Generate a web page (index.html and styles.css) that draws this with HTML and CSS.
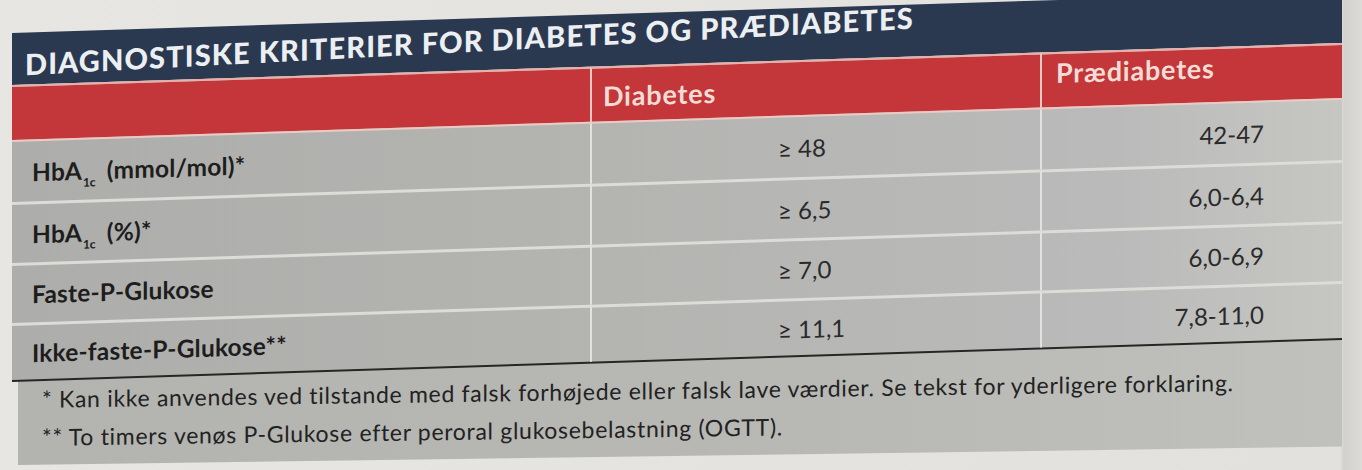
FILE: index.html
```html
<!DOCTYPE html>
<html lang="da">
<head>
<meta charset="utf-8">
<title>Diagnostiske kriterier for diabetes og prædiabetes</title>
<link rel="stylesheet" href="styles.css">
</head>
<body>
<div class="page">
  <div class="card">
    <div class="title"><h1>DIAGNOSTISKE KRITERIER FOR DIABETES OG PRÆDIABETES</h1></div>
    <div class="table">
      <div class="th"></div>
      <div class="th th-d"><span>Diabetes</span></div>
      <div class="th th-p"><span>Prædiabetes</span></div>

      <div class="td label first"><span>HbA<sub class="sub">1c</sub> (mmol/mol)*</span></div>
      <div class="td val-d first"><span>≥ 48</span></div>
      <div class="td val-p first"><span>42-47</span></div>

      <div class="td label"><span>HbA<sub class="sub">1c</sub> (%)*</span></div>
      <div class="td val-d"><span>≥ 6,5</span></div>
      <div class="td val-p"><span>6,0-6,4</span></div>

      <div class="td label"><span>Faste-P-Glukose</span></div>
      <div class="td val-d"><span>≥ 7,0</span></div>
      <div class="td val-p"><span>6,0-6,9</span></div>

      <div class="td label"><span>Ikke-faste-P-Glukose**</span></div>
      <div class="td val-d"><span>≥ 11,1</span></div>
      <div class="td val-p"><span>7,8-11,0</span></div>
    </div>
    <div class="notes">
      <p>* Kan ikke anvendes ved tilstande med falsk forhøjede eller falsk lave værdier. Se tekst for yderligere forklaring.</p>
      <p>** To timers venøs P-Glukose efter peroral glukosebelastning (OGTT).</p>
    </div>
  </div>
</div>
</body>
</html>
```

FILE: styles.css
```css
html, body {
  margin: 0;
  padding: 0;
}

body {
  width: 1362px;
  height: 470px;
  overflow: hidden;
  background: linear-gradient(to right, #e7e6e3 0, #e2e1de 1340px, #d3d1cd 1344px, #dddbd7 1362px);
  font-family: Lato, "Liberation Sans", sans-serif;
}

.page {
  padding: 12px 0 0 12px;
}

.card {
  width: 1330px;
  transform: skewY(-1.8deg);
  transform-origin: 665px 0;
}

.title {
  height: 52px;
  background: #2a3850;
}

.title h1 {
  margin: 0;
  padding-left: 13px;
  font-family: Lato, "Liberation Sans", sans-serif;
  font-weight: 900;
  font-size: 29px;
  line-height: 36px;
  letter-spacing: 1.1px;
  color: #eceff2;
  white-space: nowrap;
  transform: skewY(-1.2deg);
  transform-origin: 665px 0;
}

.table {
  position: relative;
  z-index: 1;
  display: grid;
  grid-template-columns: 578px 450px 302px;
  grid-template-rows: 57px 60px 61px 60px 57px;
  background: linear-gradient(to right, #adadab 0, #b4b4b1 600px, #bababa 1100px, #c6c6c2 1330px);
  border-bottom: 2px solid #262626;
}

.th {
  background: linear-gradient(to right, #c3363a 0, #c5363a 1100px, #d0474c 1250px, #c8393d 1330px);
  border-top: 2px solid #e7b0ab;
  border-bottom: 2px solid #ecc9c3;
  color: #f3dcd5;
  font-weight: 700;
  font-size: 27px;
  letter-spacing: 0.8px;
  display: flex;
  align-items: center;
  box-sizing: border-box;
}

.th-d {
  border-left: 2px solid #ecc9c3;
  padding-left: 11px;
  padding-top: 2px;
}

.th-p {
  border-left: 2px solid #ecc9c3;
  padding-left: 14px;
  padding-bottom: 16px;
}

.td {
  display: flex;
  align-items: center;
  box-sizing: border-box;
  border-top: 3px solid #dcdcd8;
  color: #222;
}

.td.first {
  border-top: none;
}

.label {
  padding-left: 20px;
  font-weight: 700;
  font-size: 24.5px;
  letter-spacing: 0.2px;
  color: #1d1d1d;
}

.sub {
  font-size: 12px;
  vertical-align: -7px;
  margin: 0 5px 0 1px;
  line-height: 0;
  letter-spacing: 0;
}

.val-d {
  border-left: 2px solid #e2e2de;
  padding-left: 186px;
  font-size: 24px;
  color: #2a2a2a;
}

.val-p {
  border-left: 2px solid #e2e2de;
  justify-content: flex-end;
  padding-right: 78px;
  font-size: 24px;
  color: #2a2a2a;
}

.notes {
  height: 109px;
  box-sizing: border-box;
  margin-top: -14px;
  margin-left: 6px;
  padding: 24px 0 0 24px;
  background: linear-gradient(to right, #b3b3b0 0, #b8b8b5 800px, #c0c0bc 1324px);
  transform: skewY(1deg);
  transform-origin: 665px 0;
}

.notes p {
  margin: 0;
  font-size: 23px;
  letter-spacing: 0.7px;
  line-height: 38px;
  color: #222;
  white-space: nowrap;
}
```
